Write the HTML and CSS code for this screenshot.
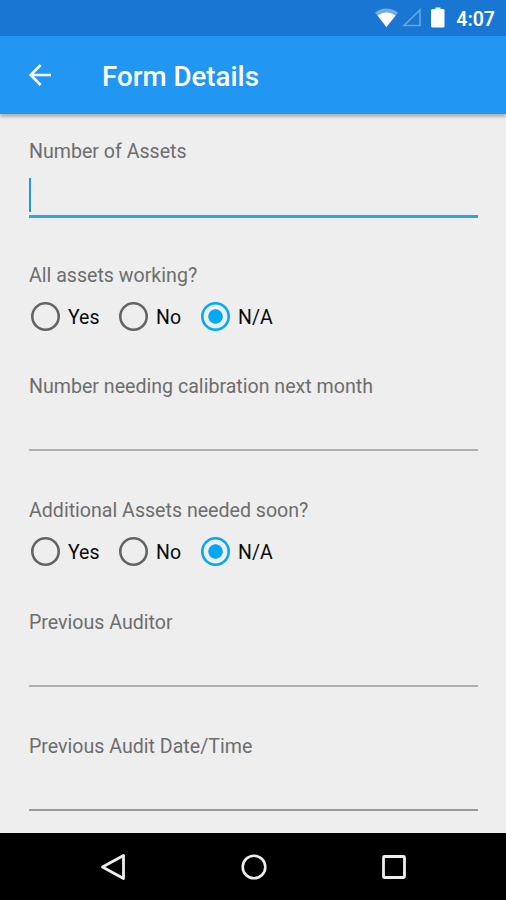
FILE: index.html
```html
<!DOCTYPE html>
<html lang="en">
<head>
<meta charset="utf-8">
<title>Form Details</title>
<link rel="stylesheet" href="styles.css">
</head>
<body>
<div class="screen">
  <div class="status">
    <svg class="status-icons" width="76" height="22" viewBox="0 0 76 22">
      <path d="M1 5.500Q12.500-2.500 24 5.500L12.500 20Z" fill="#fff" opacity=".4"/>
      <path d="M3.500 8.500Q12.500 2.500 21.500 8.500L12.500 20Z" fill="#fff"/>
      <path d="M30 18.500L46 3V18.500Z" fill="none" stroke="#fff" stroke-width="1.600" opacity=".35"/>
      <path d="M58.500 2h3v-1.500h5v1.500h3q1 0 1 1.500v15.500q0 1.500-1.500 1.500h-10.500q-1.500 0-1.500-1.500v-15.500q0-1.500 1.500-1.500z" fill="#fff"/>
    </svg>
    <span class="clock">4:07</span>
  </div>
  <header class="appbar">
    <svg class="back" width="24" height="24" viewBox="0 0 24 24"><path d="M23 12H2.500M12.700 2L2.700 12L12.700 22" fill="none" stroke="#fff" stroke-width="2.600"/></svg>
    <h1 class="title">Form Details</h1>
  </header>
  <main class="form">
    <section class="text-group">
      <div class="label">Number of Assets</div>
      <div class="input focused"><span class="caret"></span></div>
    </section>
    <section class="radio-group">
      <div class="label">All assets working?</div>
      <div class="options">
        <div class="option yes"><span class="radio"></span><span class="choice">Yes</span></div>
        <div class="option no"><span class="radio"></span><span class="choice">No</span></div>
        <div class="option"><span class="radio checked"></span><span class="choice">N/A</span></div>
      </div>
    </section>
    <section class="text-group">
      <div class="label">Number needing calibration next month</div>
      <div class="input"></div>
    </section>
    <section class="radio-group">
      <div class="label">Additional Assets needed soon?</div>
      <div class="options">
        <div class="option yes"><span class="radio"></span><span class="choice">Yes</span></div>
        <div class="option no"><span class="radio"></span><span class="choice">No</span></div>
        <div class="option"><span class="radio checked"></span><span class="choice">N/A</span></div>
      </div>
    </section>
    <section class="text-group">
      <div class="label">Previous Auditor</div>
      <div class="input"></div>
    </section>
    <section class="text-group">
      <div class="label">Previous Audit Date/Time</div>
      <div class="input last"></div>
    </section>
  </main>
  <nav class="navbar">
    <svg width="26" height="30" viewBox="0 0 26 30"><path d="M23.500 3.500V26.500L2.500 15Z" fill="none" stroke="#eee" stroke-width="2.800" stroke-linejoin="round"/></svg>
    <svg width="26" height="30" viewBox="0 0 26 30"><circle cx="13" cy="15" r="11.300" fill="none" stroke="#eee" stroke-width="2.600"/></svg>
    <svg width="26" height="30" viewBox="0 0 26 30"><rect x="2.500" y="4.500" width="21" height="21" rx="1" fill="none" stroke="#eee" stroke-width="2.800"/></svg>
  </nav>
</div>
</body>
</html>
```
FILE: styles.css
```css
* { box-sizing: border-box; }
body { margin: 0; font-family: Roboto, "Liberation Sans", sans-serif; }
.screen { width: 506px; height: 900px; display: flex; flex-direction: column; background: #eee; overflow: hidden; }
.status { height: 36px; flex: none; background: #1976d2; color: #fff; display: flex; align-items: center; justify-content: flex-end; gap: 6px; padding-right: 11px; }
.status-icons { flex: none; }
.clock { font-size: 19.500px; font-weight: 600; line-height: 24px; padding-top: 3px; }
.appbar { height: 78px; flex: none; background: #2196f3; box-shadow: 0 3px 3px rgba(0,0,0,.25); display: flex; align-items: center; gap: 50px; padding-left: 28px; }
.back { flex: none; }
.title { margin: 3px 0 0; color: #fff; font-size: 27.700px; font-weight: 500; line-height: 32px; white-space: nowrap; }
.form { flex: 1; min-height: 0; padding: 26px 28px 0 29px; }
.text-group { height: 124px; }
.radio-group { height: 111.300px; }
.label { color: #6d6d6d; font-size: 19.600px; line-height: 24px; white-space: nowrap; }
.input { height: 39px; margin-top: 13px; border-bottom: 2px solid #b0b0b0; }
.input.focused { height: 41px; padding-top: 1px; border-bottom: 3px solid #2ba5e6; }
.input.last { border-bottom-color: #999; }
.caret { display: block; width: 2px; height: 34px; background: #2196e3; }
.options { display: flex; padding: 13px 0 0 2px; }
.option { display: flex; align-items: center; gap: 8px; height: 30px; font-size: 19.500px; line-height: 30px; color: #0a0a0a; }
.choice { padding-top: 3px; }
.yes { width: 88px; }
.no { width: 82px; }
.radio { width: 29px; height: 29px; flex: none; border-radius: 50%; box-shadow: inset 0 0 0 2.600px #646464; }
.radio.checked { box-shadow: inset 0 0 0 2.600px #03a9f4; background: radial-gradient(circle, #03a9f4 0 6.800px, transparent 7.600px); }
.navbar { height: 67px; flex: none; background: #000; display: flex; align-items: center; gap: 114.500px; padding-left: 100px; }
```
